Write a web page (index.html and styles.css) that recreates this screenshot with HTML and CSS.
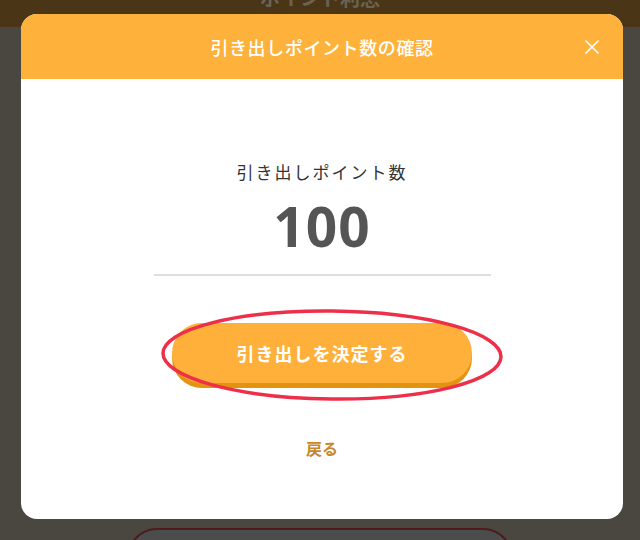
FILE: index.html
```html
<!DOCTYPE html>
<html lang="ja">
<head>
    <meta charset="UTF-8">
    <meta name="viewport" content="width=device-width, initial-scale=1.0">
    <title>ポイント利息</title>
    <link rel="stylesheet" href="styles.css">
</head>
<body>
    <header class="page-header">
        <span class="page-title">ポイント利息</span>
    </header>
    <main class="page-content">
        <button class="page-btn" type="button"></button>
    </main>

    <div class="modal">
        <div class="modal-header">
            <h1>引き出しポイント数の確認</h1>
            <button class="modal-close" type="button" aria-label="閉じる">
                <svg width="16" height="16" viewBox="0 0 16 16">
                    <path d="M2 2 L14 14 M14 2 L2 14" stroke="#fff" stroke-width="1.6" stroke-linecap="round" fill="none"/>
                </svg>
            </button>
        </div>
        <div class="modal-body">
            <div class="amount-label">引き出しポイント数</div>
            <div class="amount-value">100</div>
            <div class="divider"></div>
            <div class="submit-wrap">
                <button class="submit-btn" type="button">引き出しを決定する</button>
                <svg class="highlight" width="345" height="95" viewBox="0 0 345 95">
                    <ellipse cx="172" cy="47" rx="169" ry="44" stroke="#ee2f49" stroke-width="3.5" fill="none"/>
                </svg>
            </div>
            <a class="back-link" href="#">戻る</a>
        </div>
    </div>
</body>
</html>
```

FILE: styles.css
```css
* {
    margin: 0;
    padding: 0;
    box-sizing: border-box;
}

body {
    font-family: "Noto Sans CJK JP", "Noto Sans", sans-serif;
    background-color: #4a4640;
    width: 640px;
    height: 540px;
    overflow: hidden;
}

.page-header {
    height: 27px;
    background-color: #4a3617;
    display: flex;
    justify-content: center;
    overflow: hidden;
}

.page-title {
    font-size: 20px;
    line-height: 20px;
    font-weight: 700;
    color: #6b6253;
    margin-top: -12px;
}

.page-content {
    height: 513px;
    padding-top: 501px;
    display: flex;
    justify-content: center;
    overflow: hidden;
}

.page-btn {
    width: 386px;
    height: 60px;
    flex-shrink: 0;
    border: 2px solid #4e1a1c;
    border-radius: 30px;
    background-color: #4b4d4d;
}

.modal {
    position: absolute;
    left: 21px;
    top: 14px;
    width: 602px;
    height: 505px;
    background-color: #fff;
    border-radius: 16px;
    overflow: hidden;
}

.modal-header {
    position: relative;
    height: 65px;
    background-color: #ffb23b;
    display: flex;
    align-items: center;
    justify-content: center;
}

.modal-header h1 {
    font-size: 18px;
    font-weight: 500;
    color: #fff;
    letter-spacing: 0.6px;
}

.modal-close {
    position: absolute;
    right: 23px;
    top: 25px;
    width: 16px;
    height: 16px;
    border: none;
    background: none;
    display: flex;
}

.modal-body {
    display: flex;
    flex-direction: column;
    align-items: center;
    padding-top: 81px;
}

.amount-label {
    font-size: 17px;
    line-height: 24px;
    color: #333;
    letter-spacing: 2px;
}

.amount-value {
    font-family: "Noto Sans", sans-serif;
    font-size: 55px;
    line-height: 60px;
    font-weight: 700;
    color: #555;
    margin-top: 12px;
    letter-spacing: 1px;
}

.divider {
    width: 337px;
    height: 2px;
    background-color: #dedede;
    margin-top: 18px;
}

.submit-wrap {
    position: relative;
    margin-top: 47px;
}

.submit-btn {
    display: block;
    width: 300px;
    height: 60px;
    border: none;
    border-radius: 30px;
    background-color: #ffb03b;
    box-shadow: 0 5px 0 #e2930f;
    color: #fff;
    font-family: "Noto Sans CJK JP", sans-serif;
    font-size: 18px;
    font-weight: 700;
    letter-spacing: 1px;
}

.highlight {
    position: absolute;
    left: -12px;
    top: -15px;
    transform: rotate(0.6deg);
}

.back-link {
    margin-top: 53px;
    font-size: 16px;
    line-height: 24px;
    font-weight: 700;
    color: #c8872a;
    text-decoration: none;
}
```
